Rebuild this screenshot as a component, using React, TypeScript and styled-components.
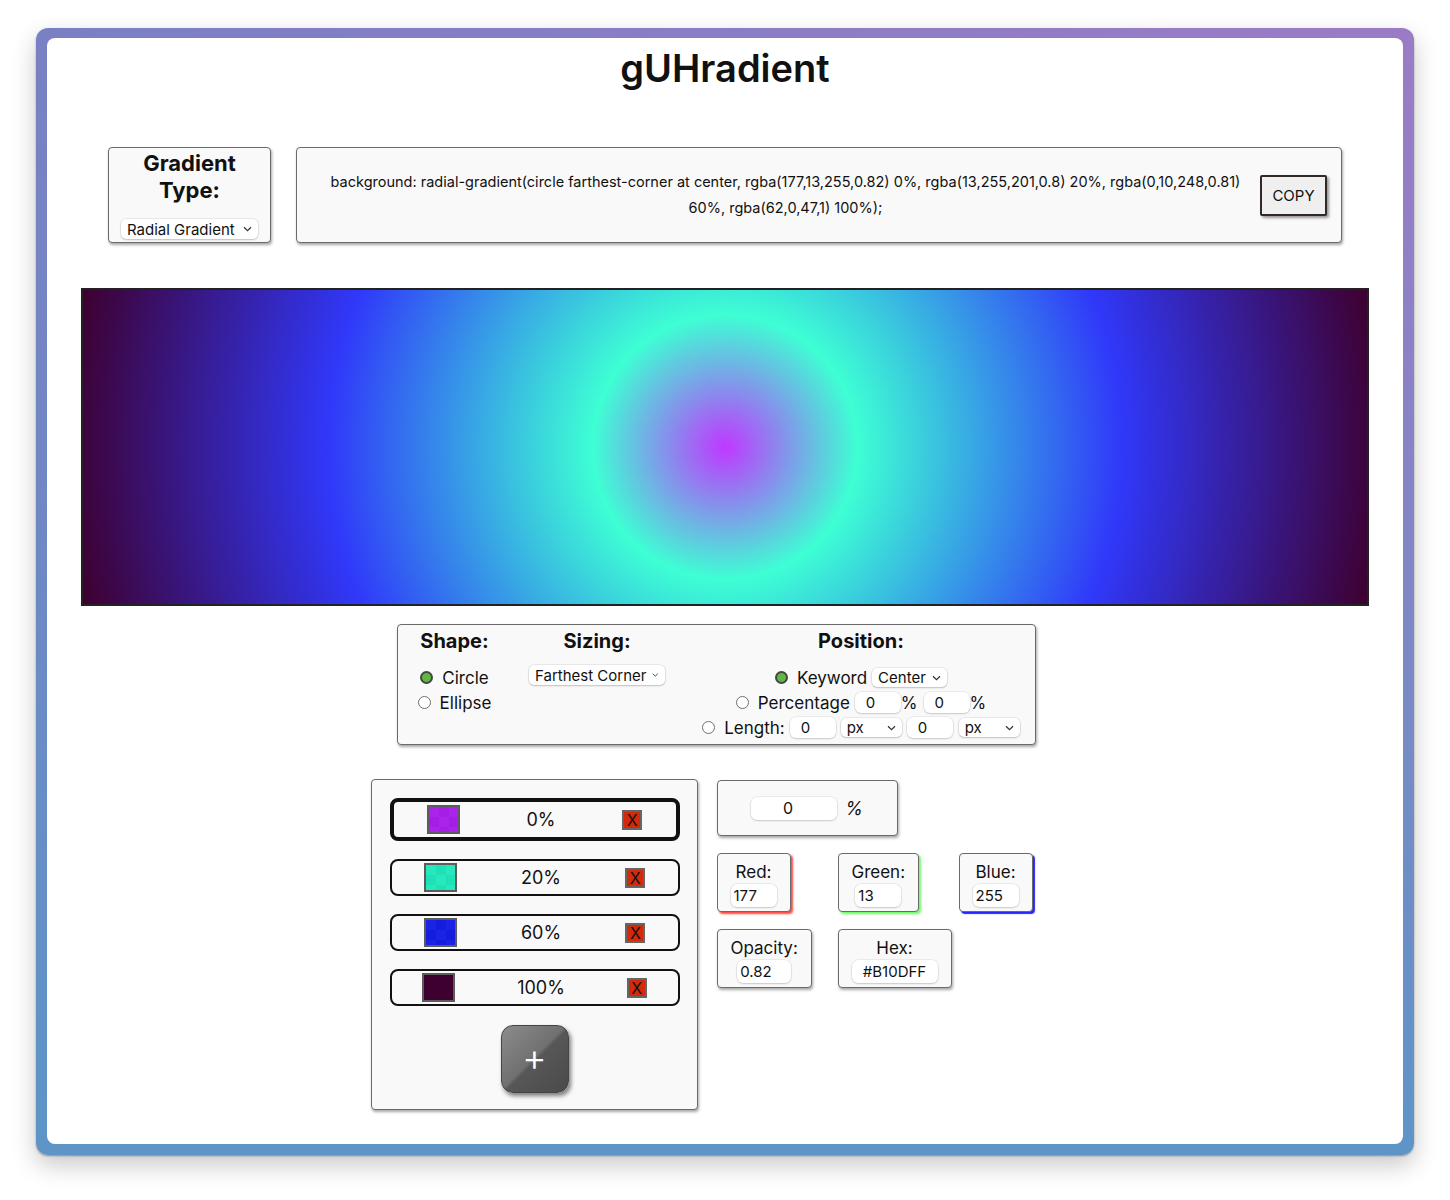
import React, { useState } from "react";
import styled, { createGlobalStyle, css } from "styled-components";

const GlobalStyle = createGlobalStyle`
  html, body { margin: 0; padding: 0; background: #fff; }
  body { font-family: Inter, "Noto Sans", sans-serif; color: #111; }
  * { box-sizing: border-box; }
`;

type Stop = { pct: number; rgba: [number, number, number, number] };

const STOPS: Stop[] = [
  { pct: 0, rgba: [177, 13, 255, 0.82] },
  { pct: 20, rgba: [13, 255, 201, 0.8] },
  { pct: 60, rgba: [0, 10, 248, 0.81] },
  { pct: 100, rgba: [62, 0, 47, 1] },
];

const rgbaStr = (s: Stop) => `rgba(${s.rgba.join(",")})`;

const Page = styled.div`
  padding: 28px 36px 45px;
`;

const Frame = styled.div`
  border-radius: 12px;
  padding: 10px 11px 11px;
  background: linear-gradient(to bottom, rgba(94, 149, 198, 0) 0%, rgba(94, 149, 198, 0.35) 40%, #5e95c6 100%),
    linear-gradient(to right, #7a80c4 0%, #9c7bc6 100%);
  box-shadow: 0 1px 2px rgba(0, 0, 0, 0.35), 0 10px 24px rgba(0, 0, 0, 0.22);
`;

const Inner = styled.div`
  background: #fff;
  border-radius: 8px;
  height: 1106px;
  display: flex;
  flex-direction: column;
`;

const Title = styled.h1`
  margin: 0;
  padding-top: 6px;
  font-family: Inter, sans-serif;
  font-size: 38px;
  font-weight: 600;
  line-height: 48px;
  text-align: center;
  color: #111;
`;

const Panel = styled.div`
  background: #f9f9f9;
  border: 1px solid #6a6a6a;
  border-radius: 4px;
  box-shadow: 1px 2px 3px rgba(0, 0, 0, 0.35);
`;

const TopRow = styled.div`
  display: flex;
  gap: 25px;
  margin-top: 55px;
  padding: 0 61px;
`;

const TypeBox = styled(Panel)`
  width: 163px;
  height: 96px;
  display: flex;
  flex-direction: column;
  align-items: center;
  padding: 2px 0 3px;
`;

const TypeHeading = styled.div`
  font-size: 22px;
  font-weight: 700;
  line-height: 27px;
  text-align: center;
`;

const SelectBox = styled.div<{ $w: number; $h?: number; $fs?: number }>`
  display: inline-flex;
  align-items: center;
  justify-content: space-between;
  width: ${(p) => p.$w}px;
  height: ${(p) => p.$h ?? 20}px;
  padding: 0 6px 0 6px;
  background: #fff;
  border-radius: 5px;
  box-shadow: 0 0 0 0.5px rgba(0, 0, 0, 0.12), 0 1px 2px rgba(0, 0, 0, 0.18);
  font-size: ${(p) => p.$fs ?? 15}px;
  color: #111;
  white-space: nowrap;
  flex-shrink: 0;
`;

const TypeSelect = styled(SelectBox)`
  margin-top: auto;
`;

const Chevron = () => (
  <svg width="9" height="6" viewBox="0 0 9 6" style={{ marginLeft: 6 }}>
    <path d="M1 1.2 L4.5 4.6 L8 1.2" fill="none" stroke="#333" strokeWidth="1.2" />
  </svg>
);

const CssBox = styled(Panel)`
  flex: 1;
  height: 96px;
  display: flex;
  align-items: center;
  padding: 0 14px 0 24px;
`;

const CssText = styled.div`
  flex: 1;
  text-align: center;
  font-size: 14.5px;
  line-height: 26px;
  color: #111;
`;

const CopyButton = styled.button`
  width: 67px;
  height: 41px;
  margin-left: 10px;
  border: 2px solid #332828;
  border-radius: 2px;
  background: #efefef;
  box-shadow: 2px 2px 3px rgba(0, 0, 0, 0.4);
  font-family: Inter, sans-serif;
  font-size: 15px;
  color: #111;
  padding: 0;
`;

const Preview = styled.div`
  margin: 45px 34px 0;
  height: 318px;
  border: 2px solid #222;
  background-color: #fff;
`;

const OptionsRow = styled.div`
  display: flex;
  justify-content: center;
  margin-top: 18px;
`;

const OptionsPanel = styled(Panel)`
  width: 639px;
  height: 121px;
  margin-right: 17px;
  display: flex;
  gap: 36px;
  padding: 4px 14px 0 18px;
`;

const OptionCol = styled.div<{ $w: number }>`
  width: ${(p) => p.$w}px;
  display: flex;
  flex-direction: column;
  align-items: center;
`;

const OptionHeading = styled.div`
  font-size: 20px;
  font-weight: 700;
  line-height: 24px;
  margin-bottom: 12px;
`;

const OptionLine = styled.div`
  display: flex;
  align-items: center;
  height: 25px;
  font-size: 17px;
  white-space: nowrap;
`;

const Radio = styled.span<{ $on?: boolean }>`
  display: inline-block;
  width: 13px;
  height: 13px;
  border-radius: 50%;
  margin-right: 9px;
  flex-shrink: 0;
  ${(p) =>
    p.$on
      ? css`
          background: #63b548;
          border: 2px solid #3d4a3a;
        `
      : css`
          background: #fff;
          border: 1px solid #707070;
        `}
`;

const SmallInput = styled.input<{ $w: number; $h?: number }>`
  width: ${(p) => p.$w}px;
  height: ${(p) => p.$h ?? 21}px;
  border: none;
  border-radius: 6px;
  background: #fff;
  box-shadow: 0 0 0 0.5px rgba(0, 0, 0, 0.1), 0 1px 2px rgba(0, 0, 0, 0.15);
  font-family: Inter, sans-serif;
  font-size: 15px;
  color: #111;
  padding: 0 0 0 11px;
  outline: none;
  flex-shrink: 0;
`;

const Gap = styled.span<{ $w: number }>`
  display: inline-block;
  width: ${(p) => p.$w}px;
`;

const BottomRow = styled.div`
  display: flex;
  justify-content: center;
  align-items: flex-start;
  gap: 19px;
  margin-top: 34px;
`;

const StopsPanel = styled(Panel)`
  width: 327px;
  height: 331px;
  display: flex;
  flex-direction: column;
  gap: 18px;
  padding: 18px 17px 0 18px;
`;

const StopItem = styled.div<{ $sel?: boolean }>`
  height: ${(p) => (p.$sel ? 43 : 37)}px;
  border: ${(p) => (p.$sel ? 4 : 2)}px solid #111;
  border-radius: 8px;
  display: flex;
  align-items: center;
  justify-content: space-around;
  cursor: pointer;
`;

const Swatch = styled.div`
  width: 33px;
  height: 29px;
  border: 2px solid #5c5c5c;
  background-repeat: no-repeat, repeat;
  background-size: 100% 100%, 20px 20px;
`;

const StopPct = styled.span`
  font-size: 18px;
  color: #111;
`;

const DelButton = styled.button`
  width: 20px;
  height: 20px;
  padding: 0;
  border: 2px solid #666;
  background: #d42a0b;
  color: #111;
  font-family: Inter, sans-serif;
  font-size: 16px;
  line-height: 16px;
  display: flex;
  align-items: center;
  justify-content: center;
`;

const AddButton = styled.button`
  align-self: center;
  width: 68px;
  height: 68px;
  margin-top: 1px;
  border: 1px solid #444;
  border-radius: 12px;
  background: linear-gradient(135deg, #8c8c8c 0%, #707070 48%, #575757 52%, #4a4a4a 100%);
  box-shadow: 2px 3px 4px rgba(0, 0, 0, 0.5);
  color: #fff;
  font-family: Inter, sans-serif;
  font-size: 38px;
  font-weight: 300;
  line-height: 1;
  padding: 0 0 4px;
`;

const RightCol = styled.div`
  width: 363px;
  display: flex;
  flex-direction: column;
  align-items: flex-start;
  gap: 17px;
  padding-top: 1px;
`;

const PctBox = styled(Panel)`
  width: 181px;
  height: 56px;
  display: flex;
  align-items: center;
  justify-content: center;
  gap: 8px;
  font-size: 18px;
  font-style: italic;
`;

const PctInput = styled(SmallInput)`
  text-align: center;
  padding: 0 12px 0 0;
  font-size: 16px;
`;

const ChannelGrid = styled.div`
  display: grid;
  grid-template-columns: repeat(3, 121px);
  row-gap: 17px;
`;

const shadowColors: Record<string, string> = {
  red: "2px 2px 2px rgba(255, 40, 30, 0.85)",
  green: "2px 2px 2px rgba(70, 255, 60, 0.8)",
  blue: "2px 2px 1px #2424ff",
  none: "1px 2px 3px rgba(0, 0, 0, 0.35)",
};

const ChannelBox = styled(Panel)<{ $tone: string }>`
  justify-self: start;
  display: flex;
  flex-direction: column;
  align-items: center;
  padding: 6px 13px 4px;
  box-shadow: ${(p) => shadowColors[p.$tone]};
`;

const ChannelLabel = styled.div`
  font-size: 17px;
  line-height: 24px;
`;

const ChannelInput = styled(SmallInput)<{ $center?: boolean }>`
  height: 23px;
  padding: 0 0 0 3px;
  text-align: ${(p) => (p.$center ? "center" : "left")};
  ${(p) => p.$center && "padding: 0;"}
`;

const noop = () => {};

export default function App() {
  const [selected, setSelected] = useState(0);
  const gradient = `radial-gradient(circle farthest-corner at center, ${STOPS.map(
    (s) => `${rgbaStr(s)} ${s.pct}%`
  ).join(", ")})`;
  const cssLine = `background: ${gradient};`;
  const sel = STOPS[selected];
  const hex =
    "#" +
    sel.rgba
      .slice(0, 3)
      .map((v) => v.toString(16).padStart(2, "0"))
      .join("")
      .toUpperCase();

  return (
    <Page>
      <GlobalStyle />
      <Frame>
        <Inner>
          <Title>gUHradient</Title>
          <TopRow>
            <TypeBox>
              <TypeHeading>
                Gradient
                <br />
                Type:
              </TypeHeading>
              <TypeSelect $w={137}>
                Radial Gradient
                <Chevron />
              </TypeSelect>
            </TypeBox>
            <CssBox>
              <CssText>{cssLine}</CssText>
              <CopyButton>COPY</CopyButton>
            </CssBox>
          </TopRow>

          <Preview style={{ backgroundImage: gradient }} />

          <OptionsRow>
            <OptionsPanel>
              <OptionCol $w={77}>
                <OptionHeading>Shape:</OptionHeading>
                <OptionLine>
                  <Radio $on />
                  Circle
                </OptionLine>
                <OptionLine>
                  <Radio />
                  Ellipse
                </OptionLine>
              </OptionCol>
              <OptionCol $w={136}>
                <OptionHeading>Sizing:</OptionHeading>
                <SelectBox $w={136} $h={20}>
                  Farthest Corner
                  <Chevron />
                </SelectBox>
              </OptionCol>
              <OptionCol $w={320}>
                <OptionHeading>Position:</OptionHeading>
                <OptionLine>
                  <Radio $on />
                  Keyword
                  <Gap $w={5} />
                  <SelectBox $w={75} $h={19}>
                    Center
                    <Chevron />
                  </SelectBox>
                </OptionLine>
                <OptionLine>
                  <Radio />
                  Percentage
                  <Gap $w={5} />
                  <SmallInput $w={46} value="0" onChange={noop} />
                  %
                  <Gap $w={6} />
                  <SmallInput $w={46} value="0" onChange={noop} />
                  %
                </OptionLine>
                <OptionLine>
                  <Radio />
                  Length:
                  <Gap $w={5} />
                  <SmallInput $w={46} value="0" onChange={noop} />
                  <Gap $w={5} />
                  <SelectBox $w={61} $h={19}>
                    px
                    <Chevron />
                  </SelectBox>
                  <Gap $w={5} />
                  <SmallInput $w={46} value="0" onChange={noop} />
                  <Gap $w={6} />
                  <SelectBox $w={61} $h={19}>
                    px
                    <Chevron />
                  </SelectBox>
                </OptionLine>
              </OptionCol>
            </OptionsPanel>
          </OptionsRow>

          <BottomRow>
            <StopsPanel>
              {STOPS.map((s, i) => (
                <StopItem key={s.pct} $sel={i === selected} onClick={() => setSelected(i)}>
                  <Swatch
                    style={{
                      backgroundImage: `linear-gradient(${rgbaStr(s)}, ${rgbaStr(
                        s
                      )}), repeating-conic-gradient(#6a6a6a 0% 25%, #8c8c8c 0% 50%)`,
                    }}
                  />
                  <StopPct>{s.pct}%</StopPct>
                  <DelButton>X</DelButton>
                </StopItem>
              ))}
              <AddButton>+</AddButton>
            </StopsPanel>

            <RightCol>
              <PctBox>
                <PctInput $w={86} $h={23} value={String(sel.pct)} onChange={noop} />
                <span>%</span>
              </PctBox>
              <ChannelGrid>
                <ChannelBox $tone="red">
                  <ChannelLabel>Red:</ChannelLabel>
                  <ChannelInput $w={46} value={String(sel.rgba[0])} onChange={noop} />
                </ChannelBox>
                <ChannelBox $tone="green">
                  <ChannelLabel>Green:</ChannelLabel>
                  <ChannelInput $w={46} value={String(sel.rgba[1])} onChange={noop} />
                </ChannelBox>
                <ChannelBox $tone="blue">
                  <ChannelLabel>Blue:</ChannelLabel>
                  <ChannelInput $w={46} value={String(sel.rgba[2])} onChange={noop} />
                </ChannelBox>
                <ChannelBox $tone="none">
                  <ChannelLabel>Opacity:</ChannelLabel>
                  <ChannelInput $w={54} value={String(sel.rgba[3])} onChange={noop} />
                </ChannelBox>
                <ChannelBox $tone="none">
                  <ChannelLabel>Hex:</ChannelLabel>
                  <ChannelInput $w={86} $center value={hex} onChange={noop} />
                </ChannelBox>
              </ChannelGrid>
            </RightCol>
          </BottomRow>
        </Inner>
      </Frame>
    </Page>
  );
}
